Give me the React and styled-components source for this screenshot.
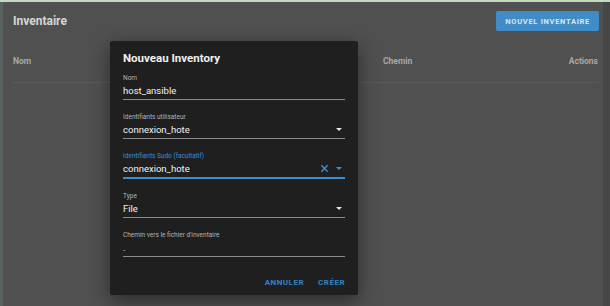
import styled, { createGlobalStyle } from "styled-components";

const Global = createGlobalStyle`
  html, body { margin: 0; padding: 0; }
  body {
    width: 610px;
    height: 306px;
    overflow: hidden;
    background: #464646;
    font-family: Roboto, "Liberation Sans", sans-serif;
  }
`;

const Screen = styled.div`
  position: relative;
  width: 610px;
  height: 306px;
  border-top: 2px solid #c3dac3;
  box-sizing: border-box;
  display: flex;
`;

const Edge = styled.div`
  width: 3px;
  background: #56625f;
`;

const Page = styled.div`
  width: 600px;
  background: #505050;
  display: flex;
  flex-direction: column;
  box-sizing: border-box;
  padding: 0 4px 0 10px;
`;

const Toolbar = styled.div`
  height: 38px;
  display: flex;
  align-items: center;
  justify-content: space-between;
`;

const PageTitle = styled.h1`
  margin: 0;
  font-size: 12px;
  font-weight: 700;
  color: #d6d6d6;
`;

const PrimaryButton = styled.button`
  border: none;
  border-radius: 2px;
  background: #3f8cc6;
  color: #d9e8f3;
  font-family: inherit;
  font-size: 7.5px;
  font-weight: 700;
  letter-spacing: 0.7px;
  height: 20px;
  padding: 0 9px;
`;

const HeadRow = styled.div`
  display: grid;
  grid-template-columns: 370px 1fr auto;
  height: 42px;
  align-items: center;
  border-bottom: 1px solid #5a5a5a;
  font-size: 8.5px;
  font-weight: 700;
  color: #a8a8a8;
  padding-right: 1px;
`;

const Overlay = styled.div`
  position: absolute;
  left: 110px;
  top: 39px;
  width: 248px;
  height: 254px;
  background: #1f1f1f;
  border-radius: 2px;
  box-shadow: 0 6px 20px rgba(0, 0, 0, 0.45);
  box-sizing: border-box;
  padding: 10px 13px 0 13px;
  display: flex;
  flex-direction: column;
`;

const DialogTitle = styled.h2`
  margin: 0 0 9px;
  font-size: 11.5px;
  font-weight: 700;
  color: #f0f0f0;
`;

const Field = styled.div`
  display: flex;
  flex-direction: column;
  margin-bottom: 13px;
  border-bottom: ${(p) => (p.$focused ? "2px solid #3a8fd0" : "1px solid #8a8a8a")};
`;

const Label = styled.span`
  font-size: 6.5px;
  line-height: 9px;
  color: ${(p) => (p.$focused ? "#3a8fd0" : "#b4b4b4")};
`;

const ValueRow = styled.div`
  display: flex;
  align-items: center;
  height: 14px;
  padding-bottom: 2px;
  font-size: 9.5px;
  color: #f2f2f2;
`;

const Value = styled.span`
  flex: 1;
`;

const Caret = styled.span`
  width: 0;
  height: 0;
  border-left: 3.5px solid transparent;
  border-right: 3.5px solid transparent;
  border-top: 3.5px solid ${(p) => (p.$color || "#e6e6e6")};
  margin-right: 3px;
`;

const Clear = styled.svg`
  width: 9px;
  height: 9px;
  margin-right: 7px;
`;

const Actions = styled.div`
  display: flex;
  justify-content: flex-end;
  gap: 14px;
  margin-top: 8px;
`;

const TextButton = styled.button`
  border: none;
  background: none;
  padding: 0;
  font-family: inherit;
  font-size: 8px;
  font-weight: 700;
  letter-spacing: 0.5px;
  color: #3384c6;
`;

function Select({ label, value, focused, clearable }) {
  return (
    <Field $focused={focused}>
      <Label $focused={focused}>{label}</Label>
      <ValueRow>
        <Value>{value}</Value>
        {clearable && (
          <Clear viewBox="0 0 10 10">
            <path d="M1.5 1.5 L8.5 8.5 M8.5 1.5 L1.5 8.5" stroke="#3a8fd0" strokeWidth="1.6" />
          </Clear>
        )}
        <Caret $color={focused ? "#3a8fd0" : undefined} />
      </ValueRow>
    </Field>
  );
}

function TextField({ label, value }) {
  return (
    <Field>
      <Label>{label}</Label>
      <ValueRow>
        <Value>{value}</Value>
      </ValueRow>
    </Field>
  );
}

export default function App() {
  return (
    <>
      <Global />
      <Screen>
        <Edge />
        <Page>
          <Toolbar>
            <PageTitle>Inventaire</PageTitle>
            <PrimaryButton>NOUVEL INVENTAIRE</PrimaryButton>
          </Toolbar>
          <HeadRow>
            <span>Nom</span>
            <span>Chemin</span>
            <span>Actions</span>
          </HeadRow>
        </Page>
        <Overlay>
          <DialogTitle>Nouveau Inventory</DialogTitle>
          <TextField label="Nom" value="host_ansible" />
          <Select label="Identifiants utilisateur" value="connexion_hote" />
          <Select label="Identifiants Sudo (facultatif)" value="connexion_hote" focused clearable />
          <Select label="Type" value="File" />
          <TextField label="Chemin vers le fichier d'inventaire" value="." />
          <Actions>
            <TextButton>ANNULER</TextButton>
            <TextButton>CRÉER</TextButton>
          </Actions>
        </Overlay>
      </Screen>
    </>
  );
}
